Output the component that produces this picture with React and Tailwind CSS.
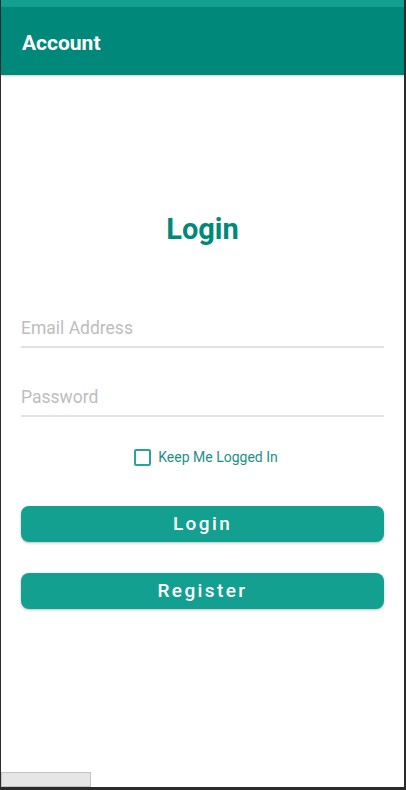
import React, { useState } from 'react';

export default function App() {
  const [email, setEmail] = useState('');
  const [password, setPassword] = useState('');
  const [keep, setKeep] = useState(false);

  return (
    <div className="w-[406px] h-[790px] flex flex-col bg-white border-l border-r-2 border-b-[3px] border-[#2b2b2b] overflow-hidden" style={{ fontFamily: 'Roboto, "Noto Sans", sans-serif' }}>
      <div className="h-[7px] bg-[#14a090] shrink-0" />
      <header className="h-[68px] shrink-0 bg-[#00897b] flex items-center px-[21px] shadow-[0_1px_2px_rgba(0,0,0,0.2)]">
        <h1 className="text-[21px] font-bold text-white mt-[6px]">Account</h1>
      </header>

      <main className="flex-1 flex flex-col px-[20px]">
        <h2 className="mt-[137px] text-center text-[29px] leading-[34px] font-bold text-[#00897b]">Login</h2>

        <input
          type="email"
          value={email}
          onChange={e => setEmail(e.target.value)}
          placeholder="Email Address"
          className="mt-[65px] h-[37px] w-full border-b-2 border-[#e2e2e2] text-[17.5px] text-gray-700 placeholder:text-[#bdbdbd] outline-none pb-[2px]"
        />
        <input
          type="password"
          value={password}
          onChange={e => setPassword(e.target.value)}
          placeholder="Password"
          className="mt-[32px] h-[37px] w-full border-b-2 border-[#e2e2e2] text-[17.5px] text-gray-700 placeholder:text-[#bdbdbd] outline-none pb-[2px]"
        />

        <label className="mt-[30px] pl-[7px] flex items-center justify-center gap-[7px] cursor-pointer">
          <input type="checkbox" checked={keep} onChange={e => setKeep(e.target.checked)} className="sr-only" />
          <span className={`w-[17px] h-[17px] rounded-[2px] border-2 border-[#26a69a] ${keep ? 'bg-[#26a69a]' : 'bg-white'}`} />
          <span className="text-[14px] text-[#1d8f87]">Keep Me Logged In</span>
        </label>

        <button className="mt-[38px] h-[36px] w-full rounded-[8px] bg-[#14a090] text-white text-[19px] font-medium tracking-[2.4px] shadow-[0_1px_3px_rgba(0,0,0,0.25)]">
          Login
        </button>
        <button className="mt-[31px] h-[36px] w-full rounded-[8px] bg-[#14a090] text-white text-[19px] font-medium tracking-[2.4px] shadow-[0_1px_3px_rgba(0,0,0,0.25)]">
          Register
        </button>
      </main>

      <div className="h-[15px] w-[90px] shrink-0 bg-[#e6e6e6] border border-[#c4c4c4]" />
    </div>
  );
}
